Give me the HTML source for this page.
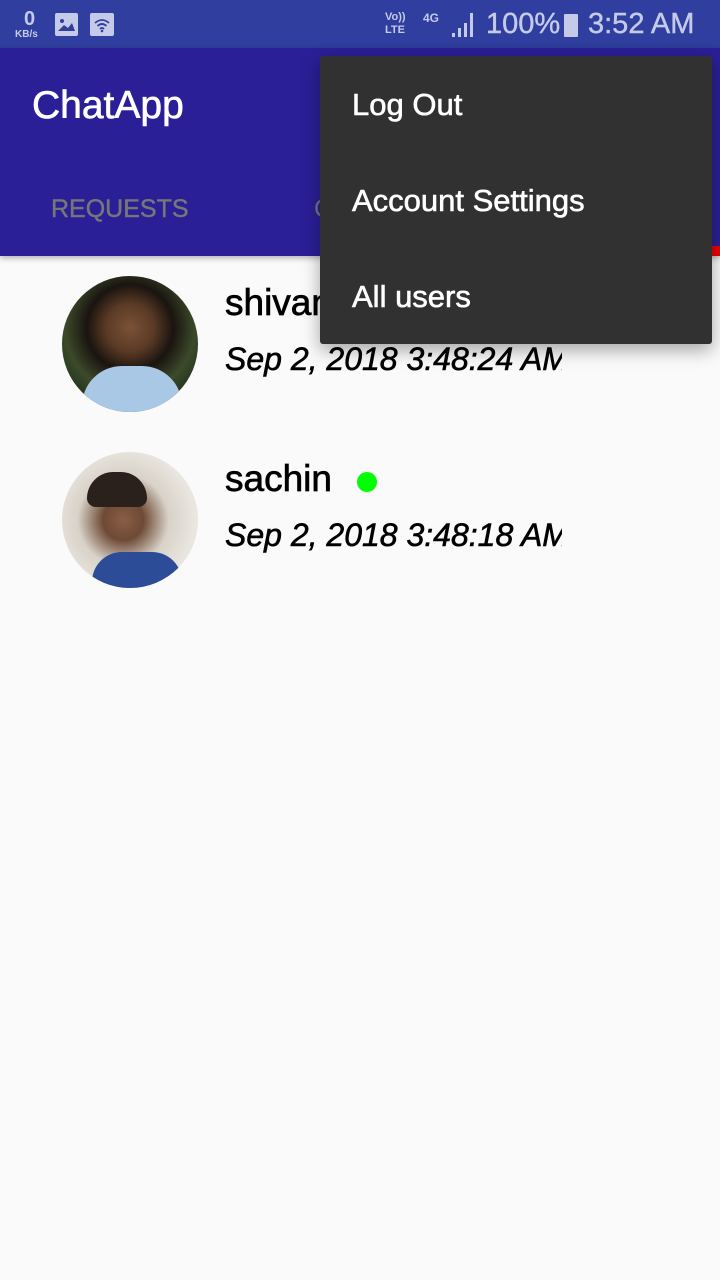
<!DOCTYPE html>
<html><head><meta charset="utf-8"><style>
*{margin:0;padding:0;box-sizing:border-box}
body{width:720px;height:1280px;background:#fafafa;font-family:"Liberation Sans",sans-serif;position:relative;overflow:hidden}
.sb{position:absolute;left:0;top:0;width:720px;height:48px;background:#303f9f;color:#c5cae9}
.ab{position:absolute;left:0;top:48px;width:720px;height:208px;background:#2a1f97;box-shadow:0 2px 6px rgba(0,0,0,.3)}
.t{position:absolute;color:#fff}
.menu{position:absolute;left:320px;top:56px;width:392px;height:288px;background:#313131;border-radius:3px;box-shadow:0 6px 18px rgba(0,0,0,.35)}
.mi{position:absolute;left:32px;color:#fff;font-size:31px;-webkit-text-stroke:0.6px #fff}
.av{position:absolute;left:62px;width:136px;height:136px;border-radius:50%;overflow:hidden}
.nm{position:absolute;left:225px;font-size:37px;color:#000;-webkit-text-stroke:0.7px #000}
.dt{position:absolute;left:225px;font-size:32px;font-style:italic;color:#000;width:337px;overflow:hidden;white-space:nowrap;-webkit-text-stroke:0.6px #000}
</style></head><body>
<div class="sb">
 <div style="position:absolute;left:24px;top:8px;font-size:20px;font-weight:bold">0</div>
 <div style="position:absolute;left:15px;top:29px;font-size:10px;font-weight:bold">KB/s</div>
 <div style="position:absolute;left:55px;top:13px;width:23px;height:23px;background:#c5cae9;border-radius:2px"><svg width="23" height="23"><circle cx="7" cy="8" r="2" fill="#303f9f"/><path d="M3 18 L9 12 L13 15 L17 10 L20 18Z" fill="#303f9f"/></svg></div>
 <div style="position:absolute;left:90px;top:13px;width:24px;height:23px;background:#c5cae9;border-radius:2px"><svg width="24" height="23"><path d="M5 10 Q12 4 19 10 M7.5 13 Q12 9 16.5 13 M10 16 Q12 14 14 16" stroke="#303f9f" stroke-width="1.8" fill="none"/><circle cx="12" cy="18" r="1.3" fill="#303f9f"/></svg></div>
 <div style="position:absolute;left:385px;top:11px;font-size:11px;font-weight:bold;line-height:13px">Vo))<br>LTE</div>
 <div style="position:absolute;left:423px;top:11px;font-size:12px;font-weight:bold">4G</div>
 <svg style="position:absolute;left:450px;top:12px" width="28" height="26"><path d="M2 25h3v-4h-3zM8 25h3v-9h-3zM14 25h3v-14h-3zM20 25h3v-24h-3z" fill="#c5cae9"/></svg>
 <div style="position:absolute;left:486px;top:8px;font-size:29px;-webkit-text-stroke:0.4px #c5cae9">100%</div>
 <div style="position:absolute;left:564px;top:14px;width:14px;height:23px;background:#c5cae9;border-radius:1px"></div>
 <div style="position:absolute;left:588px;top:8px;font-size:29px;-webkit-text-stroke:0.4px #c5cae9">3:52 AM</div>
</div>
<div class="ab">
 <div class="t" style="left:32px;top:36px;font-size:39px;-webkit-text-stroke:0.6px #fff">ChatApp</div>
 <div style="position:absolute;left:51px;top:147px;font-size:25px;color:#777;-webkit-text-stroke:0.4px #777">REQUESTS</div>
 <div style="position:absolute;left:314px;top:147px;font-size:25px;color:#777">C</div>
 <div style="position:absolute;left:700px;top:198px;width:20px;height:10px;background:#e00"></div>
</div>
<div class="av" style="top:276px;background:radial-gradient(circle at 50% 38%,#7a5238 0,#5b3a25 22%,#1a1410 40%,#3c4a2a 60%,#2a3a20 72%),linear-gradient(#000,#000)"><div style="position:absolute;left:20px;top:90px;width:100px;height:60px;background:#a9c8e6;border-radius:40px 40px 0 0"></div></div>
<div class="nm" style="top:282px">shivam</div>
<div class="dt" style="top:341px">Sep 2, 2018 3:48:24 AM</div>
<div class="av" style="top:452px;background:radial-gradient(circle at 45% 50%,#8a5e45 0,#6e4a35 20%,#d8d2c8 45%,#e9e5df 70%)"><div style="position:absolute;left:30px;top:100px;width:90px;height:50px;background:#2d4c98;border-radius:30px 30px 0 0"></div><div style="position:absolute;left:25px;top:20px;width:60px;height:35px;background:#2a211c;border-radius:30px 30px 10px 10px"></div></div>
<div class="nm" style="top:458px">sachin</div>
<div style="position:absolute;left:357px;top:472px;width:20px;height:20px;border-radius:50%;background:#00ff00"></div>
<div class="dt" style="top:517px">Sep 2, 2018 3:48:18 AM</div>
<div class="menu">
 <div class="mi" style="top:31px">Log Out</div>
 <div class="mi" style="top:127px">Account Settings</div>
 <div class="mi" style="top:223px">All users</div>
</div>
</body></html>
